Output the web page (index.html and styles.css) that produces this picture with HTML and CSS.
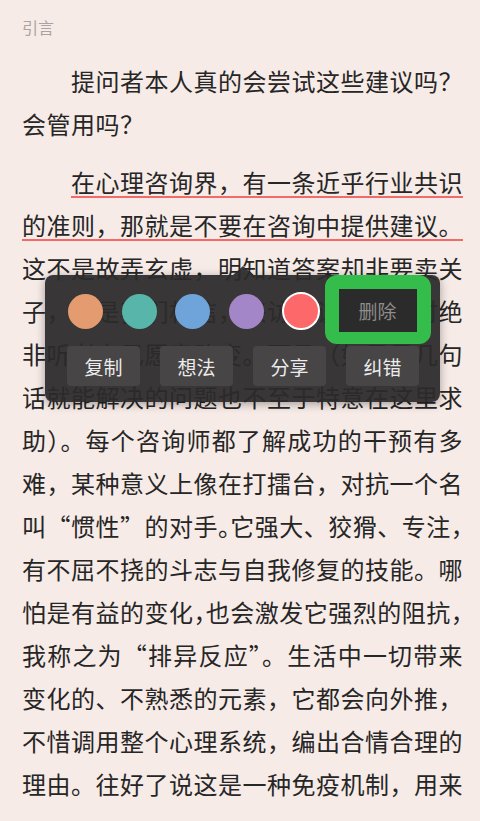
FILE: index.html
```html
<!DOCTYPE html>
<html lang="zh-CN">
<head>
    <meta charset="UTF-8">
    <meta name="viewport" content="width=device-width, initial-scale=1.0">
    <title>引言</title>
    <link rel="stylesheet" href="styles.css">
</head>
<body>
    <div class="reader">
        <div class="chapter">引言</div>

        <p class="para first">
            <span class="line indent">提问者本人真的会尝试这些建议吗？</span>
            <span class="line last">会管用吗？</span>
        </p>

        <p class="para">
            <span class="line indent"><span class="mark">在心理咨询界，有一条近乎行业共识</span></span>
            <span class="line"><span class="mark">的准则，那就是不要在咨询中提供建议。</span></span>
            <span class="line">这不是故弄玄虚，明知道答案却非要卖关</span>
            <span class="line">子，而是我们相信，来访者谈到困境时绝</span>
            <span class="line">非听者自己愿意改变。而且（如果是几句</span>
            <span class="line">话就能解决的问题也不至于特意在这里求</span>
            <span class="line">助）。每个咨询师都了解成功的干预有多</span>
            <span class="line">难，某种意义上像在打擂台，对抗一个名</span>
            <span class="line">叫“惯性”的对手<span class="half">。</span>它强大、狡猾、专注，</span>
            <span class="line">有不屈不挠的斗志与自我修复的技能。哪</span>
            <span class="line">怕是有益的变化<span class="half">，</span>也会激发它强烈的阻抗，</span>
            <span class="line">我称之为“排异反应”。生活中一切带来</span>
            <span class="line">变化的、不熟悉的元素，它都会向外推，</span>
            <span class="line">不惜调用整个心理系统，编出合情合理的</span>
            <span class="line">理由。往好了说这是一种免疫机制，用来</span>
        </p>

        <!-- 选中文字后的操作菜单 -->
        <div class="popup">
            <div class="colors">
                <span class="dot orange"></span>
                <span class="dot teal"></span>
                <span class="dot blue"></span>
                <span class="dot purple"></span>
                <span class="dot red"></span>
                <a class="del">删除</a>
            </div>
            <div class="actions">
                <a class="act">复制</a>
                <a class="act">想法</a>
                <a class="act">分享</a>
                <a class="act">纠错</a>
            </div>
        </div>
    </div>
</body>
</html>
```

FILE: styles.css
```css
*{
    box-sizing: border-box;
    margin: 0px;
    padding: 0px;
}
body{
    width: 480px;
    height: 821px;
    overflow: hidden;
    background: #f7ebe7;
    font-family: "Noto Sans CJK SC", sans-serif;
    color: #262626;
}
.reader{
    position: relative;
    height: 821px;
    padding: 17px 17px 0 22px;
}
.chapter{
    height: 20px;
    font-size: 16px;
    line-height: 20px;
    color: #aaa3a1;
}
.para{
    margin-top: 15px;
}
.para.first{
    margin-top: 22px;
}
.line{
    display: block;
    height: 43px;
    font-size: 24px;
    line-height: 43px;
    letter-spacing: .5px;
    white-space: nowrap;
    text-align: justify;
    text-align-last: justify;
}
.line.last{
    text-align-last: left;
}
.indent{
    padding-left: 49px;
}
.mark{
    text-decoration: underline;
    text-decoration-color: #f26a6a;
    text-decoration-thickness: 2px;
    text-underline-offset: 4px;
}
.half{
    letter-spacing: -11.75px;
}

/* 弹出菜单 */
.popup{
    position: absolute;
    left: 45px;
    top: 275px;
    width: 395px;
    height: 127px;
    background: rgba(44, 43, 43, .94);
    border-radius: 8px;
    box-shadow: 0 2px 10px rgba(0, 0, 0, .35);
}
.popup::before{
    content: "";
    position: absolute;
    left: 188px;
    top: -9px;
    border-left: 10px solid transparent;
    border-right: 10px solid transparent;
    border-bottom: 9px solid rgba(44, 43, 43, .94);
}
.colors{
    display: flex;
    align-items: center;
    height: 69px;
    padding-left: 23px;
}
.dot{
    width: 35px;
    height: 35px;
    margin-top: 3px;
    margin-right: 18.5px;
    border-radius: 50%;
}
.orange{
    background: #e39b6f;
}
.teal{
    background: #58b5aa;
}
.blue{
    background: #6ea4da;
}
.purple{
    background: #a386c8;
}
.red{
    width: 38px;
    height: 38px;
    margin-right: 4.5px;
    background: #fd696a;
    border: 2px solid #fff;
}
.del{
    display: flex;
    align-items: center;
    justify-content: center;
    width: 106px;
    height: 69px;
    border: 14px solid #34bd4b;
    border-bottom-width: 12px;
    border-radius: 12px;
    background: #2c2b2b;
    color: #8e8c8c;
    font-size: 19px;
}
.actions{
    display: flex;
    gap: 20px;
    padding: 2px 0 0 22px;
}
.act{
    display: flex;
    align-items: center;
    justify-content: center;
    width: 73px;
    height: 40px;
    background: #474545;
    border-radius: 4px;
    color: #ececec;
    font-size: 19px;
}
```
